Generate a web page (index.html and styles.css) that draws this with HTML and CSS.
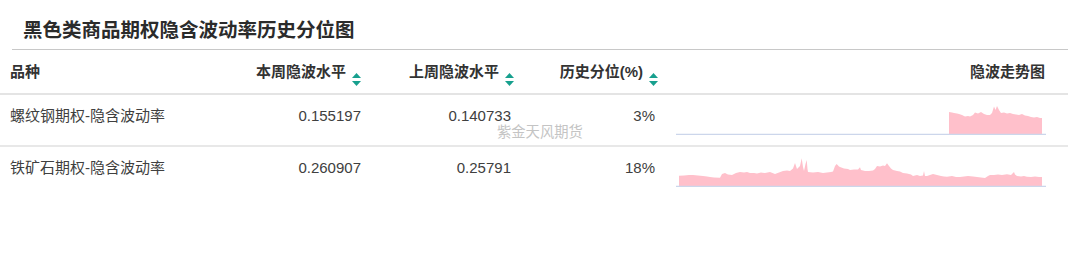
FILE: index.html
```html
<!DOCTYPE html>
<html lang="zh">
<head>
<meta charset="utf-8">
<title>黑色类商品期权隐含波动率历史分位图</title>
<link rel="stylesheet" href="styles.css">
</head>
<body>
<div class="page">
  <h1 class="title">黑色类商品期权隐含波动率历史分位图</h1>
  <div class="table">
    <div class="row head">
      <div class="cell c1">品种</div>
      <div class="cell num"><span>本周隐波水平</span><svg class="sort" viewBox="0 0 9 14" width="9" height="14"><polygon points="4.5,0 9,5 0,5"/><polygon points="0,8 9,8 4.5,13"/></svg></div>
      <div class="cell num"><span>上周隐波水平</span><svg class="sort" viewBox="0 0 9 14" width="9" height="14"><polygon points="4.5,0 9,5 0,5"/><polygon points="0,8 9,8 4.5,13"/></svg></div>
      <div class="cell num"><span>历史分位(%)</span><svg class="sort" viewBox="0 0 9 14" width="9" height="14"><polygon points="4.5,0 9,5 0,5"/><polygon points="0,8 9,8 4.5,13"/></svg></div>
      <div class="cell chart-h">隐波走势图</div>
    </div>
    <div class="row body first">
      <div class="cell c1">螺纹钢期权-隐含波动率</div>
      <div class="cell v v2">0.155197</div>
      <div class="cell v v3">0.140733</div>
      <div class="cell v v3">3%</div>
      <div class="cell spark">
        <svg viewBox="0 0 370 32" width="370" height="32">
          <polygon class="area" points="273,31 273,9 276,9.5 278,10 281,10.5 283,11 286,12 289,13.5 292,13 294,13.5 297,12 299,9.5 302,10.5 305,9 308,11 311,12 314,12 316,10 318,3.5 319.5,7 321,3 323,7 325,10 328,9.5 331,10.5 334,10 337,11 340,11.5 343,12 346,11 349,12.5 352,13 355,14 358,14.5 361,14 364,15 366,15 366,31"/>
          <line class="axis" x1="0" y1="31.5" x2="370" y2="31.5"/>
        </svg>
      </div>
    </div>
    <div class="row body">
      <div class="cell c1">铁矿石期权-隐含波动率</div>
      <div class="cell v v2">0.260907</div>
      <div class="cell v v3">0.25791</div>
      <div class="cell v v3">18%</div>
      <div class="cell spark">
        <svg viewBox="0 0 370 32" width="370" height="32">
          <polygon class="area" points="3,31 3,20.7 8,20.5 13,20 17,20 22,20.5 27,21 31,21.5 34,22 38,22.5 44,22.8 46,19 49,18 52,19.5 56,20 60,18 64,17 68,17.5 71,17 74,18 78,18 81,18.5 85,17.5 89,18 94,17 99,19 103,17.5 107,16 111,15.5 114,16 117,13.5 119,8 121,14 122,13 124,11 125.7,3.3 127,12 128,16 129.5,9 130.7,5 131.5,14 132,17 137,17.5 142,17 147,18 151,17.5 155,17 157,16.5 159,11 160.7,9 163,11.5 164,12 168,13.5 172,14 174,15 178,14.5 182,14.5 184,12.3 185,15 189,16 193,16 197,15.5 199,14 201,11 204,11.5 207,10.5 209,11 211,8.3 213,11 215,13.5 217,15 221,16 224,16.5 227,18 231,18.5 235,19.5 237,21 241,20 244,21 247,20.5 248,16 249,21 251,21 254,20 257,19 261,20 265,21 268,21.5 271,21.7 276,21 280,22 284,22 288,21.5 292,21 297,21.5 301,22 305,22.5 309,23 312,21 314,20 318,20 322,19.5 326,20 331,19.3 335,20 338,17 339,19.5 341,21 345,21.5 348,21 351,21.7 355,22 359,21.5 363,22 366,22 366,31"/>
          <line class="axis" x1="0" y1="31.5" x2="370" y2="31.5"/>
        </svg>
      </div>
    </div>
    <div class="watermark">紫金天风期货</div>
  </div>
</div>
</body>
</html>
```

FILE: styles.css
```css
html, body {
  margin: 0;
  padding: 0;
  background: #ffffff;
}

body {
  font-family: "Liberation Sans", "Noto Sans CJK SC", sans-serif;
  color: #333333;
}

.page {
  width: 1080px;
}

.title {
  margin: 0 12px;
  padding: 15px 0 0 11px;
  height: 34px;
  font-family: "Noto Sans CJK SC", sans-serif;
  font-size: 19.5px;
  line-height: 28px;
  font-weight: 700;
  color: #2b2b2b;
  border-bottom: 1px solid #c8c8c8;
}

.table {
  position: relative;
  width: 1068px;
}

.row {
  display: grid;
  grid-template-columns: 220px 151px 153px 144px 400px;
}

.head {
  height: 43px;
  border-bottom: 2px solid #e4e4e4;
  font-weight: 700;
  font-size: 15px;
  line-height: 20px;
  color: #333333;
}

.head .cell {
  padding-top: 12px;
}

.cell {
  box-sizing: border-box;
  font-size: 15px;
  line-height: 20px;
  white-space: nowrap;
}

.c1 {
  padding-left: 10px;
}

.num {
  display: flex;
  justify-content: flex-end;
  align-items: flex-start;
  padding-right: 10px;
}

.sort {
  display: block;
  margin: 11px 0 0 6px;
  fill: #17a08e;
}

.chart-h {
  text-align: right;
  padding-right: 23px;
}

.body {
  height: 50px;
  color: #404040;
}

.body.first {
  border-bottom: 2px solid #e8e8e8;
}

.body .cell {
  padding-top: 11px;
}

.v {
  text-align: right;
}

.v2 {
  padding-right: 10px;
}

.v3 {
  padding-right: 13px;
}

.body .spark {
  padding-top: 8px;
  padding-left: 8px;
}

.spark svg {
  display: block;
}

.area {
  fill: #ffc0cb;
}

.axis {
  stroke: #ccd6eb;
  stroke-width: 1.5;
}

.watermark {
  position: absolute;
  left: 497px;
  top: 71px;
  font-family: "Noto Sans CJK SC", sans-serif;
  font-size: 14.3px;
  line-height: 20px;
  color: #c4c4c4;
  pointer-events: none;
}
```
